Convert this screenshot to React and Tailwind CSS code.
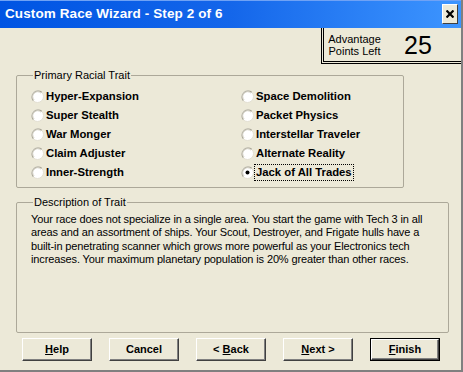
import React, { useState } from 'react';

const TRAITS_LEFT = ['Hyper-Expansion', 'Super Stealth', 'War Monger', 'Claim Adjuster', 'Inner-Strength'];
const TRAITS_RIGHT = ['Space Demolition', 'Packet Physics', 'Interstellar Traveler', 'Alternate Reality', 'Jack of All Trades'];

function Radio({ checked }) {
  return (
    <svg width="13" height="13" viewBox="0 0 13 13" className="shrink-0">
      <circle cx="6.5" cy="6.5" r="6" fill="#ffffff" stroke="#e2dfd2" strokeWidth="1" />
      <path d="M2.3 10.7 A6 6 0 0 1 10.7 2.3" fill="none" stroke="#a9a697" strokeWidth="1.2" />
      <path d="M3.1 9.9 A4.8 4.8 0 0 1 9.9 3.1" fill="none" stroke="#d3d0c3" strokeWidth="1" />
      {checked && <circle cx="6.5" cy="6.5" r="2" fill="#000" />}
    </svg>
  );
}

function TraitOption({ label, selected, onPick }) {
  return (
    <div className="flex items-center h-[19px] cursor-default" onClick={() => onPick(label)}>
      <Radio checked={selected} />
      <span
        className={
          'px-[1px] leading-[15px] border ' +
          (selected ? 'border-dotted border-black' : 'border-transparent')
        }
      >
        {label}
      </span>
    </div>
  );
}

function WinButton({ children, isDefault }) {
  const inner = (
    <button className="block w-full h-full bg-[#ece9d8] border-t border-l border-t-white border-l-white border-r border-b border-r-[#404040] border-b-[#404040] shadow-[inset_-1px_-1px_0_#808080] font-bold text-[11px] leading-none text-black">
      {children}
    </button>
  );
  if (isDefault) {
    return <div className="w-[70px] h-[23px] border border-black">{inner}</div>;
  }
  return <div className="w-[70px] h-[23px]">{inner}</div>;
}

export default function App() {
  const [trait, setTrait] = useState('Jack of All Trades');

  return (
    <div
      className="w-[463px] h-[372px] bg-[#ece9d8] flex flex-col border-r-2 border-b-2 border-r-[#808080] border-b-[#808080] text-black"
      style={{ fontFamily: '"Liberation Sans", Arial, sans-serif' }}
    >
      {/* Title bar */}
      <div className="h-[28px] shrink-0 flex items-center justify-between pl-[5px] pr-[3px] border-t border-t-[#6fa2f5] bg-gradient-to-r from-[#0054e3] via-[#1466ea] to-[#3d95ff]">
        <span className="text-white font-bold text-[13.5px] tracking-[0.1px]">Custom Race Wizard - Step 2 of 6</span>
        <div className="w-[16px] h-[20px] mb-[2px] bg-[#ece9d8] border-t border-l border-white border-r border-b border-r-[#404040] border-b-[#404040] flex items-center justify-center">
          <svg width="8" height="8" viewBox="0 0 8 8">
            <path d="M0.5 0.5 L7.5 7.5 M7.5 0.5 L0.5 7.5" stroke="#000" strokeWidth="2.2" />
          </svg>
        </div>
      </div>

      {/* Advantage points */}
      <div className="flex justify-end">
        <div className="w-[140px] h-[36px] border-l-[3px] border-b-[3px] border-double border-black flex items-center">
          <div className="text-[11px] leading-[12px] pl-[3px] pt-[1px] text-center w-[58px]">
            Advantage
            <br />
            Points Left
          </div>
          <div className="text-[25px] leading-none ml-[22px] pt-[2px]">25</div>
        </div>
      </div>

      {/* Primary Racial Trait */}
      <fieldset className="ml-[16px] mt-[5px] w-[388px] h-[119px] border border-[#aca899] rounded-[2px] px-[14px] pt-[5px]">
        <legend className="text-[11px] leading-[13px] ml-[2px] px-[1px]">Primary Racial Trait</legend>
        <div className="grid grid-cols-[210px_1fr] font-bold text-[11.3px]">
          <div className="flex flex-col">
            {TRAITS_LEFT.map((t) => (
              <TraitOption key={t} label={t} selected={trait === t} onPick={setTrait} />
            ))}
          </div>
          <div className="flex flex-col">
            {TRAITS_RIGHT.map((t) => (
              <TraitOption key={t} label={t} selected={trait === t} onPick={setTrait} />
            ))}
          </div>
        </div>
      </fieldset>

      {/* Description */}
      <fieldset className="ml-[16px] mt-[8px] w-[433px] h-[137px] border border-[#aca899] rounded-[2px] pl-[14px] pt-[4px]">
        <legend className="text-[11px] leading-[13px] ml-[2px] px-[1px]">Description of Trait</legend>
        <p className="text-[11px] leading-[13.4px] tracking-[-0.13px]">
          Your race does not specialize in a single area. You start the game with Tech 3 in all
          <br />
          areas and an assortment of ships. Your Scout, Destroyer, and Frigate hulls have a
          <br />
          built-in penetrating scanner which grows more powerful as your Electronics tech
          <br />
          increases. Your maximum planetary population is 20% greater than other races.
        </p>
      </fieldset>

      {/* Buttons */}
      <div className="flex gap-[17px] pl-[22px] mt-[5px]">
        <WinButton><span className="underline">H</span>elp</WinButton>
        <WinButton>Cancel</WinButton>
        <WinButton>&lt; <span className="underline">B</span>ack</WinButton>
        <WinButton><span className="underline">N</span>ext &gt;</WinButton>
        <WinButton isDefault><span className="underline">F</span>inish</WinButton>
      </div>
    </div>
  );
}
